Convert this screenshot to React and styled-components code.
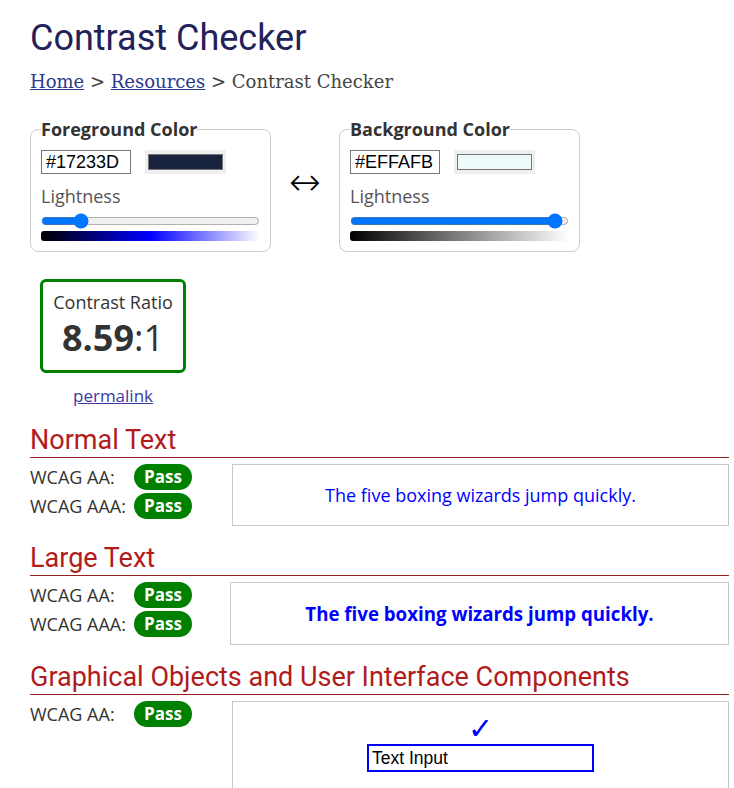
import React from "react";
import styled, { createGlobalStyle } from "styled-components";

const GlobalStyle = createGlobalStyle`
  body {
    margin: 0;
    background: #ffffff;
    font-family: "Open Sans", sans-serif;
    color: #333333;
  }
`;

const Page = styled.div`
  padding: 17px 5px 0 30px;
`;

const Title = styled.h1`
  margin: 0;
  font-family: Roboto, sans-serif;
  font-weight: 400;
  font-size: 36px;
  line-height: 43px;
  color: #22215a;
`;

const Crumbs = styled.div`
  margin-top: 10px;
  font-family: "DejaVu Serif", serif;
  font-size: 18px;
  line-height: 24px;
  color: #444444;
`;

const CrumbLink = styled.a`
  color: #2a3a8c;
  text-decoration: underline;
`;

const Pickers = styled.div`
  display: flex;
  align-items: center;
  margin-top: 23px;
`;

const Fieldset = styled.fieldset`
  margin: 0;
  border: 1px solid #cccccc;
  border-radius: 8px;
  padding: 0 10px 10px 10px;
  display: flex;
  flex-direction: column;
`;

const Legend = styled.legend`
  padding: 0;
  font-weight: 700;
  font-size: 18px;
  line-height: 24px;
  color: #333333;
`;

const HexRow = styled.div`
  display: flex;
  align-items: center;
  gap: 14px;
  margin-top: 9px;
`;

const HexInput = styled.input`
  box-sizing: border-box;
  width: 90px;
  height: 24px;
  margin: 0;
  padding: 0 4px;
  border: 1px solid #767676;
  font-family: "Liberation Sans", Arial, sans-serif;
  font-size: 18px;
  color: #000000;
`;

const Swatch = styled.div`
  box-sizing: border-box;
  width: 81px;
  height: 24px;
  padding: 4px 3px;
  background: #efefef;
`;

const SwatchFill = styled.div`
  box-sizing: border-box;
  height: 16px;
  border: 1px solid #767676;
  background: ${(p) => p.color};
`;

const Label = styled.div`
  margin-top: 10px;
  font-size: 18px;
  line-height: 24px;
  color: #555555;
`;

const Range = styled.input`
  width: 219px;
  height: 16px;
  margin: 5px 0 0 0;
`;

const Gradient = styled.div`
  margin-top: 2px;
  width: 219px;
  height: 10px;
  border-radius: 3px 0 0 3px;
  background: ${(p) => p.stops};
`;

const Swap = styled.div`
  width: 68px;
  margin-top: -6px;
  text-align: center;
  font-family: "DejaVu Sans", sans-serif;
  font-weight: 200;
  font-size: 38px;
  line-height: 38px;
  color: #000000;
`;

const RatioArea = styled.div`
  display: flex;
  flex-direction: column;
  align-items: center;
  width: 146px;
  margin: 27px 0 0 10px;
`;

const RatioBox = styled.div`
  box-sizing: border-box;
  width: 146px;
  height: 94px;
  border: 3px solid #008000;
  border-radius: 6px;
  display: flex;
  flex-direction: column;
  align-items: center;
  padding-top: 8px;
`;

const RatioLabel = styled.div`
  font-size: 18px;
  line-height: 24px;
  color: #333333;
`;

const RatioValue = styled.div`
  font-size: 36px;
  line-height: 48px;
  color: #333333;
  b {
    font-weight: 700;
  }
`;

const Permalink = styled.a`
  margin-top: 11px;
  font-size: 17px;
  line-height: 24px;
  color: #3a3aa6;
  text-decoration: underline;
`;

const Heading = styled.h2`
  margin: 17px 0 0 0;
  padding-bottom: 1px;
  font-family: Roboto, sans-serif;
  font-weight: 400;
  font-size: 27px;
  line-height: 31px;
  color: #b11b1b;
  border-bottom: 1px solid #9a1f1f;
`;

const Section = styled.div`
  display: flex;
  margin-top: 6px;
`;

const Results = styled.div`
  width: ${(p) => p.width}px;
  flex-shrink: 0;
  display: flex;
  flex-direction: column;
  gap: 3px;
`;

const ResultRow = styled.div`
  display: flex;
  align-items: center;
  height: 26px;
`;

const ResultLabel = styled.span`
  width: 104px;
  font-size: 18px;
  color: #333333;
`;

const Badge = styled.span`
  width: 58px;
  height: 26px;
  border-radius: 13px;
  background: #008000;
  color: #ffffff;
  font-weight: 700;
  font-size: 17px;
  line-height: 26px;
  text-align: center;
`;

const Sample = styled.div`
  box-sizing: border-box;
  flex: 1;
  height: ${(p) => p.height}px;
  border: 1px solid #c8c8c8;
  display: flex;
  align-items: center;
  justify-content: center;
  color: #0000ff;
  font-size: ${(p) => (p.large ? 18.7 : 18)}px;
  font-weight: ${(p) => (p.large ? 700 : 400)};
`;

const UiSample = styled(Sample)`
  flex-direction: column;
  justify-content: flex-start;
  padding-top: 12px;
`;

const Check = styled.div`
  font-family: "DejaVu Serif", serif;
  font-size: 30px;
  line-height: 30px;
  color: #0000ff;
`;

const FakeInput = styled.div`
  box-sizing: border-box;
  width: 227px;
  height: 28px;
  border: 2px solid #0000ff;
  padding: 0 3px;
  font-family: "Liberation Sans", Arial, sans-serif;
  font-size: 17.5px;
  line-height: 24px;
  color: #000000;
  font-weight: 400;
`;

const Picker = ({ legend, hex, value, stops }) => (
  <Fieldset>
    <Legend>{legend}</Legend>
    <HexRow>
      <HexInput defaultValue={hex} />
      <Swatch>
        <SwatchFill color={hex} />
      </Swatch>
    </HexRow>
    <Label>Lightness</Label>
    <Range type="range" min="0" max="100" defaultValue={value} />
    <Gradient stops={stops} />
  </Fieldset>
);

const ResultList = ({ levels, width = 202 }) => (
  <Results width={width}>
    {levels.map((lvl) => (
      <ResultRow key={lvl}>
        <ResultLabel>WCAG {lvl}:</ResultLabel>
        <Badge>Pass</Badge>
      </ResultRow>
    ))}
  </Results>
);

export default function App() {
  return (
    <>
      <GlobalStyle />
      <Page>
        <Title>Contrast Checker</Title>
        <Crumbs>
          <CrumbLink href="#">Home</CrumbLink> &gt;{" "}
          <CrumbLink href="#">Resources</CrumbLink> &gt; Contrast Checker
        </Crumbs>

        <Pickers>
          <Picker
            legend="Foreground Color"
            hex="#17233D"
            value={16}
            stops="linear-gradient(to right, #000000, #0000ff 50%, #ffffff)"
          />
          <Swap>↔</Swap>
          <Picker
            legend="Background Color"
            hex="#EFFAFB"
            value={97}
            stops="linear-gradient(to right, #000000, #ffffff)"
          />
        </Pickers>

        <RatioArea>
          <RatioBox>
            <RatioLabel>Contrast Ratio</RatioLabel>
            <RatioValue>
              <b>8.59</b>:1
            </RatioValue>
          </RatioBox>
          <Permalink href="#">permalink</Permalink>
        </RatioArea>

        <Heading>Normal Text</Heading>
        <Section>
          <ResultList levels={["AA", "AAA"]} />
          <Sample height={62}>The five boxing wizards jump quickly.</Sample>
        </Section>

        <Heading>Large Text</Heading>
        <Section>
          <ResultList levels={["AA", "AAA"]} width={200} />
          <Sample height={63} large>
            The five boxing wizards jump quickly.
          </Sample>
        </Section>

        <Heading>Graphical Objects and User Interface Components</Heading>
        <Section>
          <ResultList levels={["AA"]} />
          <UiSample height={120}>
            <Check>✓</Check>
            <FakeInput>Text Input</FakeInput>
          </UiSample>
        </Section>
      </Page>
    </>
  );
}
